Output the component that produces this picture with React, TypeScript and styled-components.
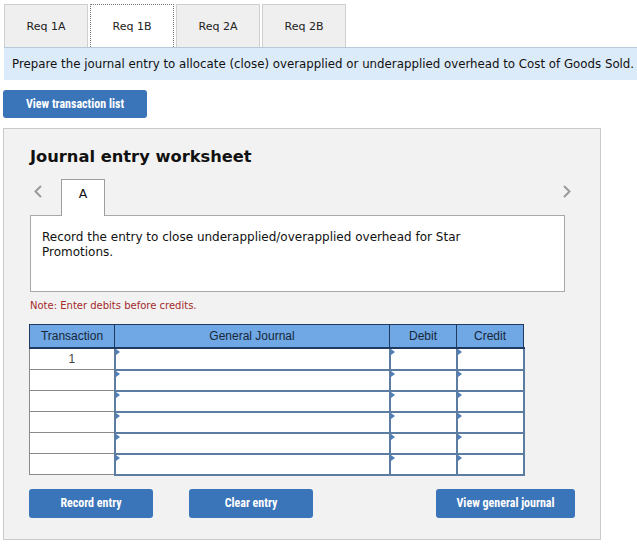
import React from 'react'
import styled, { createGlobalStyle } from 'styled-components'

const GlobalStyle = createGlobalStyle`
  body {
    margin: 0;
    background: #ffffff;
    font-family: "DejaVu Sans", Verdana, sans-serif;
    color: #111;
  }
`

const reqTabs = ['Req 1A', 'Req 1B', 'Req 2A', 'Req 2B']
const rows = ['1', '', '', '', '', '']

const Page = styled.div`
  width: 637px;
  padding-top: 4px;
`

const TabBar = styled.div`
  display: flex;
  gap: 2px;
  padding-left: 4px;
`

const ReqTab = styled.div<{ $active?: boolean }>`
  width: 84px;
  height: 43px;
  box-sizing: border-box;
  display: flex;
  align-items: center;
  justify-content: center;
  font-size: 11px;
  color: #222;
  background: ${({ $active }) => ($active ? '#ffffff' : '#efefef')};
  border: ${({ $active }) => ($active ? '1px dotted #777' : '1px solid #cfcfcf')};
  border-bottom: none;
`

const Banner = styled.div`
  margin-left: 4px;
  height: 33px;
  display: flex;
  align-items: center;
  padding-left: 8px;
  background: #dcebf9;
  border-top: 1px solid #b9c9d8;
  box-sizing: border-box;
  font-size: 11.8px;
  white-space: nowrap;
  overflow: hidden;
`

const BlueButton = styled.button<{ $width: number }>`
  width: ${({ $width }) => $width}px;
  height: 29px;
  border: none;
  border-radius: 3px;
  background: #3a74b9;
  color: #fff;
  font-family: "Liberation Sans Narrow", "Roboto Condensed", "Liberation Sans", Arial, sans-serif;
  font-weight: bold;
  font-size: 12px;
  cursor: pointer;
  padding: 0;
`

const TopButtonRow = styled.div`
  padding: 10px 0 0 3px;
`

const Panel = styled.div`
  margin: 10px 0 0 3px;
  width: 598px;
  height: 412px;
  box-sizing: border-box;
  background: #f2f2f2;
  border: 1px solid #cacaca;
  padding: 18px 0 0 26px;
`

const Heading = styled.h2`
  margin: 0;
  font-size: 16.3px;
  font-weight: bold;
  color: #111;
  line-height: 20px;
`

const EntryNav = styled.div`
  margin-top: 12px;
  width: 541px;
  display: flex;
  align-items: flex-end;
`

const Chevron = styled.span<{ $side: 'left' | 'right' }>`
  display: flex;
  align-items: flex-start;
  height: 36px;
  box-sizing: border-box;
  padding-top: 6px;
  color: #9a9a9a;
  margin: ${({ $side }) => ($side === 'left' ? '0 19px 0 4px' : '0 0 0 auto')};
`

const EntryTab = styled.div`
  width: 44px;
  height: 37px;
  box-sizing: border-box;
  background: #fff;
  border: 1px solid #9e9e9e;
  border-bottom: none;
  margin-bottom: -1px;
  position: relative;
  z-index: 1;
  display: flex;
  justify-content: center;
  padding-top: 6px;
  font-size: 12.5px;
`

const EntryBox = styled.div`
  width: 535px;
  height: 77px;
  box-sizing: border-box;
  background: #fff;
  border: 1px solid #a9a9a9;
  padding: 14px 11px 0;
  font-size: 12px;
  line-height: 15px;
`

const Note = styled.div`
  margin-top: 8px;
  font-size: 10px;
  color: #a52a2a;
`

const Journal = styled.table`
  margin-top: 13px;
  margin-left: -1px;
  border-collapse: collapse;
  table-layout: fixed;
  width: 490px;
`

const HeadCell = styled.th<{ $width: number }>`
  width: ${({ $width }) => $width}px;
  height: 22px;
  padding: 0;
  background: #6fa8e4;
  border: 1px solid #1e3a5e;
  border-bottom-width: 2px;
  font-family: "Liberation Sans", Arial, sans-serif;
  font-weight: normal;
  font-size: 12px;
  color: #17263a;
`

const NumberCell = styled.td`
  height: 20px;
  padding: 0;
  background: #fff;
  border: 1px solid #8a8a8a;
  border-right: 2px solid #5c7ca2;
  text-align: center;
  font-family: "Liberation Sans", Arial, sans-serif;
  font-size: 12px;
  color: #444;
`

const InputCell = styled.td`
  padding: 0;
  background: #fff;
  border: 2px solid #5c7ca2;
  position: relative;

  &::before {
    content: '';
    position: absolute;
    top: 0;
    left: 0;
    border-style: solid;
    border-width: 3px 0 3px 4px;
    border-color: transparent transparent transparent #4f7fb8;
  }
`

const ActionRow = styled.div`
  margin-top: 13px;
  width: 546px;
  display: flex;
  gap: 36px;
  margin-left: -1px;
`

const Spacer = styled.div`
  flex: 1;
`

const ChevronIcon = ({ side }: { side: 'left' | 'right' }) => (
  <svg width="8" height="13" viewBox="0 0 8 13">
    <path
      d={side === 'left' ? 'M7 1L1.5 6.5L7 12' : 'M1 1L6.5 6.5L1 12'}
      fill="none"
      stroke="currentColor"
      strokeWidth="2"
    />
  </svg>
)

export default function App() {
  return (
    <>
      <GlobalStyle />
      <Page>
        <TabBar>
          {reqTabs.map((t) => (
            <ReqTab key={t} $active={t === 'Req 1B'}>
              {t}
            </ReqTab>
          ))}
        </TabBar>
        <Banner>
          Prepare the journal entry to allocate (close) overapplied or underapplied overhead to Cost of Goods Sold.
        </Banner>
        <TopButtonRow>
          <BlueButton $width={144} style={{ height: 28 }}>View transaction list</BlueButton>
        </TopButtonRow>
        <Panel>
          <Heading>Journal entry worksheet</Heading>
          <EntryNav>
            <Chevron $side="left">
              <ChevronIcon side="left" />
            </Chevron>
            <EntryTab>A</EntryTab>
            <Chevron $side="right">
              <ChevronIcon side="right" />
            </Chevron>
          </EntryNav>
          <EntryBox>
            Record the entry to close underapplied/overapplied overhead for Star
            <br />
            Promotions.
          </EntryBox>
          <Note>Note: Enter debits before credits.</Note>
          <Journal>
            <thead>
              <tr>
                <HeadCell $width={84}>Transaction</HeadCell>
                <HeadCell $width={274}>General Journal</HeadCell>
                <HeadCell $width={66}>Debit</HeadCell>
                <HeadCell $width={66}>Credit</HeadCell>
              </tr>
            </thead>
            <tbody>
              {rows.map((r, i) => (
                <tr key={i}>
                  <NumberCell>{r}</NumberCell>
                  <InputCell />
                  <InputCell />
                  <InputCell />
                </tr>
              ))}
            </tbody>
          </Journal>
          <ActionRow>
            <BlueButton $width={124}>Record entry</BlueButton>
            <BlueButton $width={124}>Clear entry</BlueButton>
            <Spacer />
            <BlueButton $width={139}>View general journal</BlueButton>
          </ActionRow>
        </Panel>
      </Page>
    </>
  )
}
